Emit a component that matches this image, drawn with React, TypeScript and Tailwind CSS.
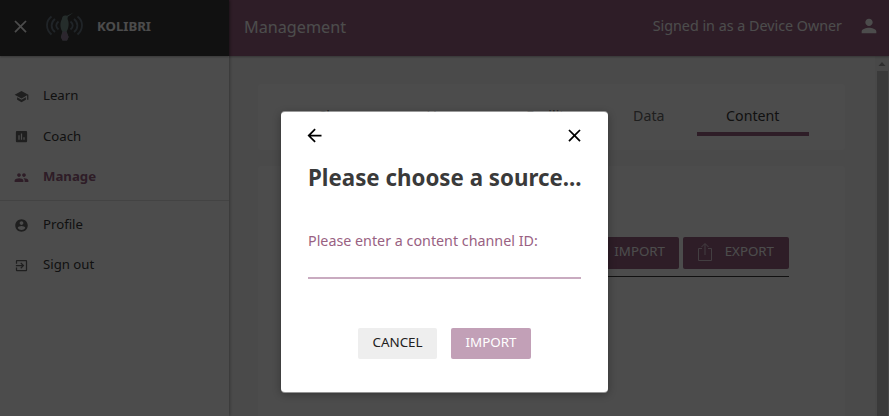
import React from "react";

const icons = {
  learn: "M5 13.18v4L12 21l7-3.82v-4L12 17l-7-3.82zM12 3L1 9l11 6 9-4.91V17h2V9L12 3z",
  coach: "M19 3H5c-1.1 0-2 .9-2 2v14c0 1.1.9 2 2 2h14c1.1 0 2-.9 2-2V5c0-1.1-.9-2-2-2zM9 17H7v-7h2v7zm4 0h-2V7h2v10zm4 0h-2v-4h2v4z",
  manage:
    "M16 11c1.66 0 2.99-1.34 2.99-3S17.66 5 16 5c-1.66 0-3 1.34-3 3s1.34 3 3 3zm-8 0c1.66 0 2.99-1.34 2.99-3S9.66 5 8 5C6.34 5 5 6.34 5 8s1.34 3 3 3zm0 2c-2.33 0-7 1.17-7 3.5V19h14v-2.5c0-2.33-4.67-3.5-7-3.5zm8 0c-.29 0-.62.02-.97.05 1.16.84 1.97 1.97 1.97 3.45V19h6v-2.5c0-2.33-4.67-3.5-7-3.5z",
  profile:
    "M12 2C6.48 2 2 6.48 2 12s4.48 10 10 10 10-4.48 10-10S17.52 2 12 2zm0 3c1.66 0 3 1.34 3 3s-1.34 3-3 3-3-1.34-3-3 1.34-3 3-3zm0 14.2c-2.5 0-4.71-1.28-6-3.22.03-1.99 4-3.08 6-3.08 1.99 0 5.97 1.09 6 3.08-1.29 1.94-3.5 3.22-6 3.22z",
  signOut:
    "M10.09 15.59L11.5 17l5-5-5-5-1.41 1.41L12.67 11H3v2h9.67l-2.58 2.59zM19 3H5c-1.11 0-2 .9-2 2v4h2V5h14v14H5v-4H3v4c0 1.1.89 2 2 2h14c1.1 0 2-.9 2-2V5c0-1.1-.9-2-2-2z",
  person: "M12 12c2.21 0 4-1.79 4-4s-1.79-4-4-4-4 1.79-4 4 1.79 4 4 4zm0 2c-2.67 0-8 1.34-8 4v2h16v-2c0-2.66-5.33-4-8-4z",
  close: "M19 6.41L17.59 5 12 10.59 6.41 5 5 6.41 10.59 12 5 17.59 6.41 19 12 13.41 17.59 19 19 17.59 13.41 12z",
  back: "M20 11H7.83l5.59-5.59L12 4l-8 8 8 8 1.41-1.41L7.83 13H20v-2z",
};

function Icon({ name, className }: { name: keyof typeof icons; className: string }) {
  return (
    <svg viewBox="0 0 24 24" fill="currentColor" className={`shrink-0 ${className}`}>
      <path d={icons[name]} />
    </svg>
  );
}

function Logo() {
  return (
    <svg viewBox="0 0 38 30" className="ml-[15px] h-[30px] w-[38px] shrink-0" fill="none" strokeWidth="1.8">
      <g stroke="#6c7a86">
        <path d="M5.500 4.500C-.5 9-.5 17 5.500 22.500M9 7C4.500 10.500 4.500 16.500 9 20M12.500 9.500C9.500 12 9.500 15 12.500 17.500" />
        <path d="M31.500 4.500C37.500 9 37.500 17 31.500 22.500M28 7C32.500 10.500 32.500 16.500 28 20M24.500 9.500C27.500 12 27.500 15 24.500 17.500" />
      </g>
      <path d="M27.500 .5L21 3.800C18 2.500 15.800 4.500 16 7C14 10 13.800 15.500 16.300 19.500L15 25L16.500 28.500H21L22.500 25L20.700 19.500C23.300 15 23 10 21.500 7L21.800 4.800Z" fill="#7c9692" />
      <path d="M17 19.500L14.800 25L16.500 28.500H21L22.700 25L20.200 19.500Z" fill="#93809a" />
    </svg>
  );
}

function NavItem({ icon, label, active = false }: { icon: keyof typeof icons; label: string; active?: boolean }) {
  return (
    <a className={`flex h-[40.4px] items-center pl-[13.5px] text-[13.2px] ${active ? "font-bold text-[#996182]" : "text-[#3a3a3a]"}`}>
      <Icon name={icon} className={`mt-px h-[15px] w-[15px] ${active ? "" : "text-[#686868]"}`} />
      <span className="ml-[14.5px]">{label}</span>
    </a>
  );
}

function Sidebar() {
  return (
    <aside className="relative z-10 w-[229px] shrink-0 bg-white shadow-[1px_0_3px_rgba(0,0,0,0.3)]">
      <div className="flex h-14 items-center bg-[#3a3a3a] pb-[3px] pl-[10px] text-white shadow-[0_1px_2px_rgba(0,0,0,0.3)]">
        <Icon name="close" className="h-[21px] w-[21px]" />
        <Logo />
        <span className="ml-[13px] text-[13.2px] font-bold">KOLIBRI</span>
      </div>
      <nav className="pt-[19.9px]">
        <NavItem icon="learn" label="Learn" />
        <NavItem icon="coach" label="Coach" />
        <NavItem icon="manage" label="Manage" active />
        <div className="mt-[3px] mb-[3.5px] h-px bg-[#e2e2e2]" />
        <NavItem icon="profile" label="Profile" />
        <NavItem icon="signOut" label="Sign out" />
      </nav>
    </aside>
  );
}

function ExportIcon() {
  return (
    <svg viewBox="0 0 14 18" className="h-[18px] w-[14px] opacity-70" fill="none" stroke="currentColor" strokeWidth="1">
      <path d="M4 5.500H.5V17.500H13.500V5.500H10M7 12V1M3.500 4L7 .5L10.500 4" />
    </svg>
  );
}

const tabs = ["Classes", "Users", "Facility", "Data", "Content"];

function Content() {
  return (
    <div className="flex min-h-0 flex-1 bg-[#f9f9f9]">
      <main className="flex flex-1 flex-col gap-4 overflow-hidden pt-7 pr-[30px] pl-[29px]">
        <div className="flex h-[66px] shrink-0 rounded-sm bg-white pl-[32px] text-[14.2px] text-[#686868]">
          {tabs.map((tab) =>
            tab === "Content" ? (
              <div key={tab} className="mt-[13px] flex h-[39px] w-[112px] items-center justify-center border-b-4 border-[#996182] text-[#3a3a3a]">
                <span className="pt-[3px]">{tab}</span>
              </div>
            ) : (
              <div key={tab} className={`flex h-[64px] items-center justify-center ${tab === "Data" ? "w-[96px]" : "w-[103.6px]"}`}>
                {tab}
              </div>
            )
          )}
        </div>
        <section className="flex-1 rounded-t-sm bg-white pt-[71px] pr-[56px] pl-8">
          <div className="flex justify-end gap-1 border-b border-[#3a3a3a] pb-[7px] text-[13.3px] text-white">
            <button className="flex h-8 w-[106px] items-center justify-end rounded-[2px] bg-[#996182] pr-[14px] pb-[3px]">IMPORT</button>
            <button className="flex h-8 w-[106px] items-center justify-between rounded-[2px] bg-[#996182] pr-[15px] pb-[3px] pl-[15px]">
              <ExportIcon />
              EXPORT
            </button>
          </div>
        </section>
      </main>
      <div className="flex w-[14px] flex-col items-center bg-[#f1f1f1]">
        <svg viewBox="0 0 14 15" className="h-[15px] w-[14px]" fill="#999">
          <path d="M3.500 10H10.500L7 6Z" />
        </svg>
        <div className="w-[11px] flex-1 bg-[#c1c1c1]" />
      </div>
    </div>
  );
}

function SourceDialog() {
  return (
    <div role="dialog" className="absolute top-[112px] left-[281px] flex h-[280px] w-[327px] flex-col rounded-[4px] bg-white px-[27px] shadow-[0_-1px_0_rgba(255,255,255,0.45),0_1px_0_rgba(255,255,255,0.45),0_2px_8px_rgba(0,0,0,0.33)]">
      <div className="flex h-[47px] items-center justify-between text-black">
        <Icon name="back" className="-ml-[4px] h-[21px] w-[21px]" />
        <Icon name="close" className="-mr-[4px] h-[21px] w-[21px]" />
      </div>
      <h1 className="mt-[2px] text-[22.3px] leading-[34px] font-bold whitespace-nowrap text-[#3a3a3a]">Please choose a source...</h1>
      <label className="mt-[36px] text-[14.3px] leading-5 text-[#996182]">Please enter a content channel ID:</label>
      <input className="h-[28px] border-b-2 border-[#c9abc0] outline-none" />
      <div className="mt-[49px] flex h-[31px] justify-center gap-[14px] text-[13.4px]">
        <button className="w-[79px] rounded-[2px] bg-[#eee] pb-[2px] text-[#212121]">CANCEL</button>
        <button className="w-[80px] rounded-[2px] bg-[#c2a0b7] pb-[2px] text-white">IMPORT</button>
      </div>
    </div>
  );
}

export default function App() {
  return (
    <div className="relative flex h-[416px] w-[889px] overflow-hidden font-['Noto_Sans',sans-serif]">
      <Sidebar />
      <div className="flex min-w-0 flex-1 flex-col">
        <header className="z-[5] flex h-14 shrink-0 items-center justify-between bg-[#996182] pr-[9px] pb-[3px] pl-[15px] text-white shadow-[0_1px_2px_rgba(0,0,0,0.3)]">
          <span className="pt-px text-[16.2px]">Management</span>
          <div className="flex items-center text-[14.3px]">
            <span className="pb-[2px]">Signed in as a Device Owner</span>
            <Icon name="person" className="mb-px ml-[16px] h-[22px] w-[22px]" />
          </div>
        </header>
        <Content />
      </div>
      <div className="absolute inset-0 z-20 bg-black/70">
        <SourceDialog />
      </div>
    </div>
  );
}
